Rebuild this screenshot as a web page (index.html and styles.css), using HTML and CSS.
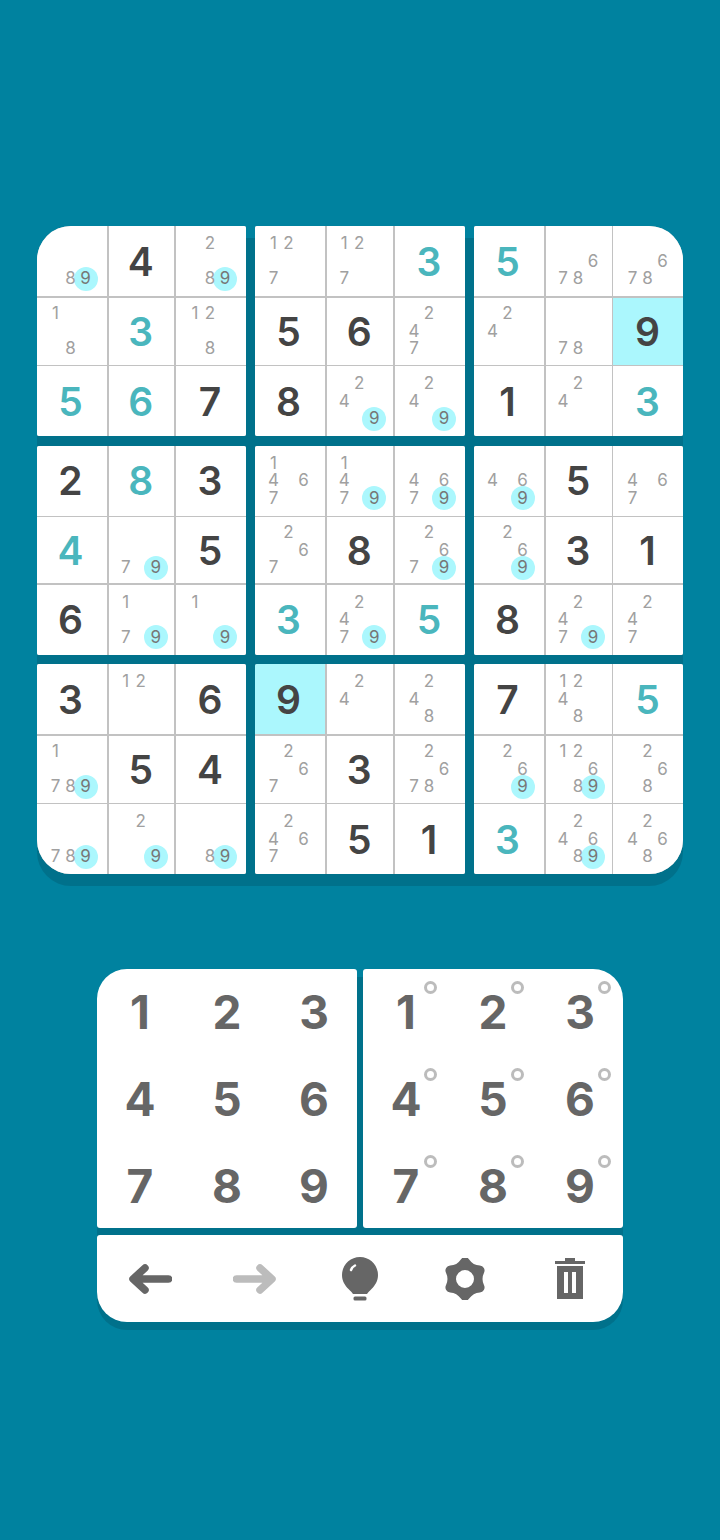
FILE: index.html
```html
<!DOCTYPE html>
<html lang="en">
<head>
<meta charset="utf-8">
<title>Sudoku</title>
<link rel="stylesheet" href="styles.css">
</head>
<body>
<main class="game">
<section class="board">
  <div class="box tl">
    <div class="c notes"><i class="n8">8</i><i class="n9 on">9</i></div>
    <div class="c">4</div>
    <div class="c notes"><i class="n2">2</i><i class="n8">8</i><i class="n9 on">9</i></div>
    <div class="c notes"><i class="n1">1</i><i class="n8">8</i></div>
    <div class="c given">3</div>
    <div class="c notes"><i class="n1">1</i><i class="n2">2</i><i class="n8">8</i></div>
    <div class="c given">5</div>
    <div class="c given">6</div>
    <div class="c">7</div>
  </div>
  <div class="box">
    <div class="c notes"><i class="n1">1</i><i class="n2">2</i><i class="n7">7</i></div>
    <div class="c notes"><i class="n1">1</i><i class="n2">2</i><i class="n7">7</i></div>
    <div class="c given">3</div>
    <div class="c">5</div>
    <div class="c">6</div>
    <div class="c notes"><i class="n2">2</i><i class="n4">4</i><i class="n7">7</i></div>
    <div class="c">8</div>
    <div class="c notes"><i class="n2">2</i><i class="n4">4</i><i class="n9 on">9</i></div>
    <div class="c notes"><i class="n2">2</i><i class="n4">4</i><i class="n9 on">9</i></div>
  </div>
  <div class="box tr">
    <div class="c given">5</div>
    <div class="c notes"><i class="n6">6</i><i class="n7">7</i><i class="n8">8</i></div>
    <div class="c notes"><i class="n6">6</i><i class="n7">7</i><i class="n8">8</i></div>
    <div class="c notes"><i class="n2">2</i><i class="n4">4</i></div>
    <div class="c notes"><i class="n7">7</i><i class="n8">8</i></div>
    <div class="c hot">9</div>
    <div class="c">1</div>
    <div class="c notes"><i class="n2">2</i><i class="n4">4</i></div>
    <div class="c given">3</div>
  </div>
  <div class="box">
    <div class="c">2</div>
    <div class="c given">8</div>
    <div class="c">3</div>
    <div class="c given">4</div>
    <div class="c notes"><i class="n7">7</i><i class="n9 on">9</i></div>
    <div class="c">5</div>
    <div class="c">6</div>
    <div class="c notes"><i class="n1">1</i><i class="n7">7</i><i class="n9 on">9</i></div>
    <div class="c notes"><i class="n1">1</i><i class="n9 on">9</i></div>
  </div>
  <div class="box">
    <div class="c notes"><i class="n1">1</i><i class="n4">4</i><i class="n6">6</i><i class="n7">7</i></div>
    <div class="c notes"><i class="n1">1</i><i class="n4">4</i><i class="n7">7</i><i class="n9 on">9</i></div>
    <div class="c notes"><i class="n4">4</i><i class="n6">6</i><i class="n7">7</i><i class="n9 on">9</i></div>
    <div class="c notes"><i class="n2">2</i><i class="n6">6</i><i class="n7">7</i></div>
    <div class="c">8</div>
    <div class="c notes"><i class="n2">2</i><i class="n6">6</i><i class="n7">7</i><i class="n9 on">9</i></div>
    <div class="c given">3</div>
    <div class="c notes"><i class="n2">2</i><i class="n4">4</i><i class="n7">7</i><i class="n9 on">9</i></div>
    <div class="c given">5</div>
  </div>
  <div class="box">
    <div class="c notes"><i class="n4">4</i><i class="n6">6</i><i class="n9 on">9</i></div>
    <div class="c">5</div>
    <div class="c notes"><i class="n4">4</i><i class="n6">6</i><i class="n7">7</i></div>
    <div class="c notes"><i class="n2">2</i><i class="n6">6</i><i class="n9 on">9</i></div>
    <div class="c">3</div>
    <div class="c">1</div>
    <div class="c">8</div>
    <div class="c notes"><i class="n2">2</i><i class="n4">4</i><i class="n7">7</i><i class="n9 on">9</i></div>
    <div class="c notes"><i class="n2">2</i><i class="n4">4</i><i class="n7">7</i></div>
  </div>
  <div class="box bl">
    <div class="c">3</div>
    <div class="c notes"><i class="n1">1</i><i class="n2">2</i></div>
    <div class="c">6</div>
    <div class="c notes"><i class="n1">1</i><i class="n7">7</i><i class="n8">8</i><i class="n9 on">9</i></div>
    <div class="c">5</div>
    <div class="c">4</div>
    <div class="c notes"><i class="n7">7</i><i class="n8">8</i><i class="n9 on">9</i></div>
    <div class="c notes"><i class="n2">2</i><i class="n9 on">9</i></div>
    <div class="c notes"><i class="n8">8</i><i class="n9 on">9</i></div>
  </div>
  <div class="box">
    <div class="c hot">9</div>
    <div class="c notes"><i class="n2">2</i><i class="n4">4</i></div>
    <div class="c notes"><i class="n2">2</i><i class="n4">4</i><i class="n8">8</i></div>
    <div class="c notes"><i class="n2">2</i><i class="n6">6</i><i class="n7">7</i></div>
    <div class="c">3</div>
    <div class="c notes"><i class="n2">2</i><i class="n6">6</i><i class="n7">7</i><i class="n8">8</i></div>
    <div class="c notes"><i class="n2">2</i><i class="n4">4</i><i class="n6">6</i><i class="n7">7</i></div>
    <div class="c">5</div>
    <div class="c">1</div>
  </div>
  <div class="box br">
    <div class="c">7</div>
    <div class="c notes"><i class="n1">1</i><i class="n2">2</i><i class="n4">4</i><i class="n8">8</i></div>
    <div class="c given">5</div>
    <div class="c notes"><i class="n2">2</i><i class="n6">6</i><i class="n9 on">9</i></div>
    <div class="c notes"><i class="n1">1</i><i class="n2">2</i><i class="n6">6</i><i class="n8">8</i><i class="n9 on">9</i></div>
    <div class="c notes"><i class="n2">2</i><i class="n6">6</i><i class="n8">8</i></div>
    <div class="c given">3</div>
    <div class="c notes"><i class="n2">2</i><i class="n4">4</i><i class="n6">6</i><i class="n8">8</i><i class="n9 on">9</i></div>
    <div class="c notes"><i class="n2">2</i><i class="n4">4</i><i class="n6">6</i><i class="n8">8</i></div>
  </div>
</section>

<section class="controls">
  <div class="pad pad-left">
    <span>1</span><span>2</span><span>3</span><span>4</span><span>5</span><span>6</span><span>7</span><span>8</span><span>9</span>
  </div>
  <div class="pad pad-right">
    <span>1</span><span>2</span><span>3</span><span>4</span><span>5</span><span>6</span><span>7</span><span>8</span><span>9</span>
  </div>
  <div class="toolbar">
    <svg class="arrow" viewBox="0 0 44 30"><path d="M40.500 15H7M17 4L5 15l12 11"/></svg>
    <svg class="arrow off" viewBox="0 0 44 30"><path d="M3.500 15H37M27 4l12 11-12 11"/></svg>
    <svg class="bulb" viewBox="0 0 36 44"><path class="fill" d="M18 0C8 0 0 8 0 18c0 6 3 10.500 6.500 14 2.500 2.500 4 4 4.500 5h14c.5-1 2-2.500 4.500-5C33 28.500 36 24 36 18 36 8 28 0 18 0Z"/><rect class="fill" x="11.500" y="39.500" width="13" height="4" rx="1.500"/><path class="glint" d="M9 13c.7-2 2-3.500 4-4.500"/></svg>
    <svg class="gear" viewBox="0 0 40 42"><path class="fill" fill-rule="evenodd" d="M15.840 1.440A5 5 0 0 1 24.160 1.440Q28 7.140 34.860 7.620A5 5 0 0 1 39.020 14.820Q36 21 39.020 27.180A5 5 0 0 1 34.860 34.380Q28 34.860 24.160 40.560A5 5 0 0 1 15.840 40.560Q12 34.860 5.140 34.380A5 5 0 0 1 .98 27.180Q4 21 .98 14.820A5 5 0 0 1 5.140 7.620Q12 7.140 15.840 1.440ZM20 12a9 9 0 1 0 0 18a9 9 0 1 0 0-18Z"/></svg>
    <svg class="trash" viewBox="0 0 30 41"><path class="fill" fill-rule="evenodd" d="M10 0h10v3h10v3H0V3h10ZM2 8h26v33H2ZM9 14v21h4V14ZM17 14v21h4V14Z"/></svg>
  </div>
</section>
</main>
</body>
</html>
```

FILE: styles.css
```css
*, *::before, *::after { box-sizing: border-box; }
html, body { margin: 0; height: 100%; }
body {
  background: #00829f;
  font-family: Inter, "Noto Sans", sans-serif;
  overflow: hidden;
}
.game {
  display: flex;
  flex-direction: column;
  align-items: center;
  padding-top: 226px;
}

/* board */
.board {
  position: relative;
  z-index: 0;
  width: 646px;
  display: grid;
  grid-template-columns: 208.500px 209.500px 209px;
  grid-template-rows: 210px 209px 210px;
  gap: 9.500px;
}
.board::before {
  content: "";
  position: absolute;
  inset: 12px 0 -12px;
  background: #00718b;
  border-radius: 34px;
  z-index: -1;
}
.box {
  display: grid;
  grid-template-columns: 70px 1fr 70px;
  grid-template-rows: 70px 1fr 70px;
  gap: 1.500px;
  background: #c2c2c2;
  border-radius: 2px;
  overflow: hidden;
}
.tl { border-top-left-radius: 34px; }
.tr { border-top-right-radius: 34px; }
.bl { border-bottom-left-radius: 34px; }
.br { border-bottom-right-radius: 34px; }

.c {
  display: flex;
  align-items: center;
  justify-content: center;
  padding-right: 1px;
  background: #fff;
  color: #444;
  font-size: 39px;
  font-weight: 600;
  line-height: 1;
  isolation: isolate;
}
.c:nth-child(3n+1) { padding-right: 3px; }
.given { color: #4ab6bd; }
.hot { background: #abf7fd; }

/* pencil marks */
.notes {
  display: grid;
  grid-template-columns: repeat(3, 15px);
  grid-template-rows: repeat(3, 17.500px);
  grid-template-areas: "a b c" "d e f" "g h j";
  align-content: center;
  justify-content: center;
  font-size: 17px;
  font-weight: 400;
  color: #a0a0a0;
}
.notes i {
  position: relative;
  display: flex;
  align-items: center;
  justify-content: center;
  font-style: normal;
}
.n1 { grid-area: a; }
.n2 { grid-area: b; }
.n4 { grid-area: d; }
.n6 { grid-area: f; }
.n7 { grid-area: g; }
.n8 { grid-area: h; }
.n9 { grid-area: j; }
.notes .on { color: #777; }
.on::before {
  content: "";
  position: absolute;
  left: -4.500px;
  top: -3.250px;
  width: 24px;
  height: 24px;
  border-radius: 50%;
  background: #abf7fd;
  z-index: -1;
}

/* keypad */
.controls {
  position: relative;
  z-index: 0;
  margin-top: 95px;
  width: 526px;
  display: grid;
  grid-template-columns: 260px 260px;
  grid-template-rows: 259px 87px;
  gap: 7px 6px;
}
.controls::before {
  content: "";
  position: absolute;
  inset: 8px 0 -8px;
  background: #00718b;
  border-radius: 30px;
  z-index: -1;
}
.pad {
  display: grid;
  grid-template-columns: repeat(3, 87px);
  grid-template-rows: repeat(3, 87px);
  align-content: center;
  justify-content: center;
  background: #fff;
  border-radius: 3px;
}
.pad span {
  position: relative;
  display: flex;
  align-items: center;
  justify-content: center;
  color: #666;
  font-size: 46px;
  font-weight: 700;
  line-height: 1;
}
.pad-left { border-top-left-radius: 30px; }
.pad-right { border-top-right-radius: 30px; }
.pad-right span::after {
  content: "";
  position: absolute;
  left: 61px;
  top: 13px;
  width: 13px;
  height: 13px;
  border: 3px solid #bcbcbc;
  border-radius: 50%;
}

/* toolbar */
.toolbar {
  grid-column: 1 / 3;
  display: grid;
  grid-template-columns: repeat(5, 105.200px);
  justify-items: center;
  align-items: center;
  background: #fff;
  border-radius: 3px 3px 30px 30px;
}
.toolbar svg { display: block; }
.arrow { width: 44px; height: 30px; }
.arrow path {
  fill: none;
  stroke: #666;
  stroke-width: 7.500;
  stroke-linecap: round;
  stroke-linejoin: round;
}
.arrow.off path { stroke: #bcbcbc; }
.fill { fill: #666; }
.glint {
  fill: none;
  stroke: #fff;
  stroke-width: 2.500;
  stroke-linecap: round;
}
.bulb { width: 36px; height: 44px; }
.gear { width: 40px; height: 42px; }
.trash { width: 30px; height: 41px; }
```
